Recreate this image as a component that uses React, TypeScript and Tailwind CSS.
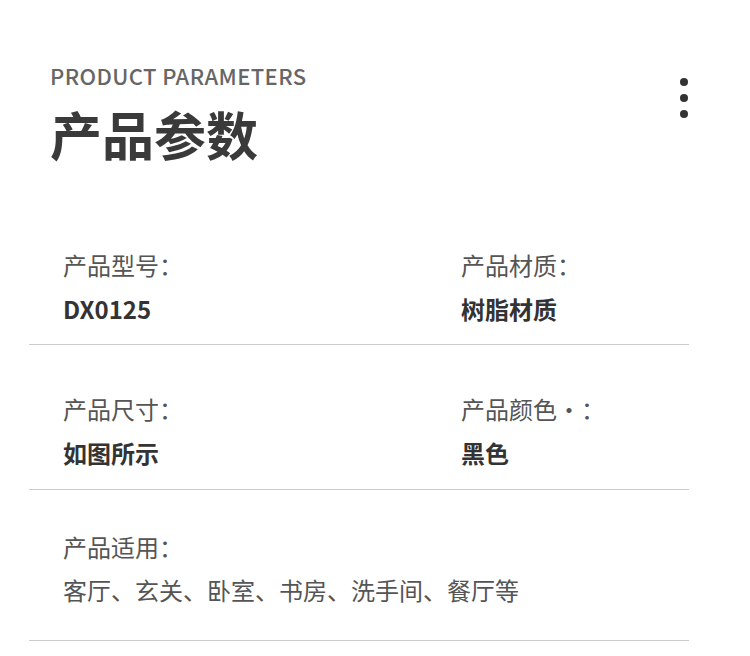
import React from "react";

const font = { fontFamily: '"Noto Sans CJK SC", "Noto Sans", sans-serif' };

function Cell({ label, value, bold = true, gap = "mt-[14px]" }: { label: string; value: string; bold?: boolean; gap?: string }) {
  return (
    <div className="flex flex-col">
      <div className="text-[24px] leading-[30px] text-[#555555]">{label}</div>
      <div className={`${gap} text-[24px] leading-[30px] ${bold ? "font-bold text-[#333333]" : "text-[#555555]"}`}>{value}</div>
    </div>
  );
}

export default function App() {
  return (
    <div className="w-[750px] h-[656px] bg-white overflow-hidden" style={font}>
      <div className="relative pl-[50px] pt-[60px]">
        <div className="text-[22px] leading-[30px] font-medium tracking-[0.4px] text-[#666666]">PRODUCT PARAMETERS</div>
        <div className="mt-[13px] text-[52px] leading-[62px] font-bold text-[#3a3a3a]">产品参数</div>
        <div className="absolute right-[62px] top-[78px] flex flex-col gap-[8px]">
          <span className="block w-[8px] h-[8px] rounded-full bg-[#333333]" />
          <span className="block w-[8px] h-[8px] rounded-full bg-[#333333]" />
          <span className="block w-[8px] h-[8px] rounded-full bg-[#333333]" />
        </div>
      </div>
      <div className="ml-[29px] w-[660px] mt-[85px]">
        <div className="grid grid-cols-[398px_1fr] pl-[34px] pb-[20px] border-b border-[#cccccc]">
          <Cell label="产品型号：" value="DX0125" />
          <Cell label="产品材质：" value="树脂材质" />
        </div>
        <div className="grid grid-cols-[398px_1fr] pl-[34px] pt-[49px] pb-[21px] border-b border-[#cccccc]">
          <Cell label="产品尺寸：" value="如图所示" />
          <Cell label="产品颜色·：" value="黑色" />
        </div>
        <div className="pl-[34px] pt-[42px] pb-[35px] border-b border-[#cccccc]">
          <Cell label="产品适用：" value="客厅、玄关、卧室、书房、洗手间、餐厅等" bold={false} gap="mt-[13px]" />
        </div>
      </div>
    </div>
  );
}
